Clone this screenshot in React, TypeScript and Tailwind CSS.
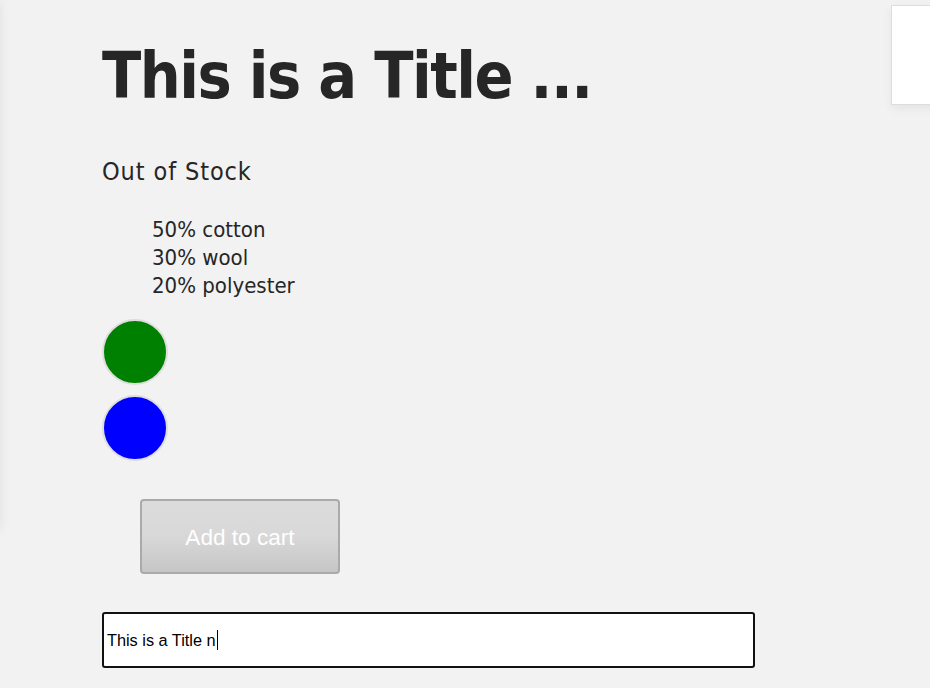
import React from "react";

const swatches = ["bg-[#008000]", "bg-[#0000ff]"];

const ProductPage = () => {
  return (
    <div className="relative min-h-[688px] w-full overflow-hidden bg-[#f2f2f2] text-[#262626] font-['DejaVu_Sans_Condensed','DejaVu_Sans',sans-serif]">
      {/* side drawer peeking from the left */}
      <div className="absolute -left-[300px] top-0 h-[530px] w-[300px] bg-[#f2f2f2] shadow-[0_0_12px_rgba(0,0,0,0.08)]" />
      {/* mini cart box at top right */}
      <div className="absolute left-[891px] top-[5px] h-[100px] w-[80px] border border-[#dddddd] bg-white shadow-[0_4px_10px_rgba(0,0,0,0.06)]" />

      <div className="flex flex-col pl-[102px] pt-[36px]">
        <h1 className="text-[64px] font-bold leading-[80px] tracking-[-1.5px]">This is a Title ...</h1>
        <p className="mt-[40px] text-[25px] leading-[32px] tracking-[0.9px]">Out of Stock</p>
        <ul className="mt-[28px] pl-[50px] text-[22px] leading-[28px]">
          <li>50% cotton</li>
          <li>30% wool</li>
          <li>20% polyester</li>
        </ul>
        <div className="mt-[19px] flex flex-col gap-[10px]">
          {swatches.map((c) => (
            <div key={c} className={`h-[66px] w-[66px] rounded-full border-2 border-[#dddddd] ${c}`} />
          ))}
        </div>
        <div className="mt-[38px] pl-[38px]">
          <button className="flex h-[75px] w-[200px] items-center justify-center rounded-[4px] border-2 border-[#aaaaaa] bg-gradient-to-b from-[#dcdcdc] via-[#d8d8d8] to-[#c6c6c6] pt-[2px] font-['Liberation_Sans',Arial,sans-serif] text-[22.6px] text-white">
            Add to cart
          </button>
        </div>
        <div className="mt-[38px] flex h-[56px] w-[653px] items-center rounded-[3px] border-2 border-[#111111] bg-white px-[3px] font-['Liberation_Sans',Arial,sans-serif] text-[16.3px] text-black">
          <span>This is a Title n</span>
          <span className="ml-[1px] h-[20px] w-[1px] bg-black" />
        </div>
      </div>
    </div>
  );
};

export default function App() {
  return <ProductPage />;
}
